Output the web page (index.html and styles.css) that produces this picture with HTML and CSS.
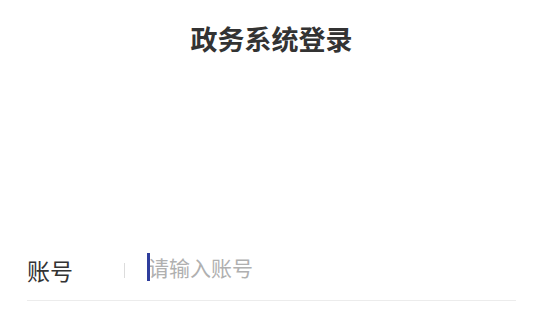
FILE: index.html
```html
<!DOCTYPE html>
<html lang="zh-CN">
<head>
<meta charset="utf-8">
<title>政务系统登录</title>
<link rel="stylesheet" href="styles.css">
</head>
<body>
<div class="page">
  <header class="header">
    <h1 class="title">政务系统登录</h1>
  </header>
  <form class="form">
    <div class="row">
      <span class="label">账号</span>
      <span class="sep"></span>
      <div class="field">
        <span class="caret"></span>
        <span class="placeholder">请输入账号</span>
      </div>
    </div>
  </form>
</div>
</body>
</html>
```

FILE: styles.css
```css
html, body {
  margin: 0;
  padding: 0;
  background: #ffffff;
}
body {
  font-family: "Noto Sans CJK SC", "Noto Sans", sans-serif;
  color: #333333;
}
.page {
  width: 543px;
  height: 315px;
  overflow: hidden;
}
.header {
  height: 240px;
  box-sizing: border-box;
  padding-top: 20px;
  display: flex;
  justify-content: center;
}
.title {
  margin: 0;
  font-size: 27px;
  line-height: 38px;
  font-weight: 700;
  color: #333333;
}
.form {
  margin: 0 27px;
}
.row {
  height: 61px;
  box-sizing: border-box;
  border-bottom: 1px solid #ececec;
  display: flex;
  align-items: center;
}
.label {
  width: 97px;
  font-size: 23px;
  line-height: 30px;
  color: #333333;
}
.sep {
  width: 1px;
  height: 15px;
  background: #dcdcdc;
  margin-right: 22px;
}
.field {
  position: relative;
  flex: 1;
  margin-bottom: 6px;
  font-size: 21px;
  line-height: 28px;
  color: #b0b0b0;
}
.caret {
  position: absolute;
  left: 0;
  top: 0;
  width: 3px;
  height: 28px;
  background: #2e3d9c;
}
.placeholder {
  padding-left: 1px;
}
```
